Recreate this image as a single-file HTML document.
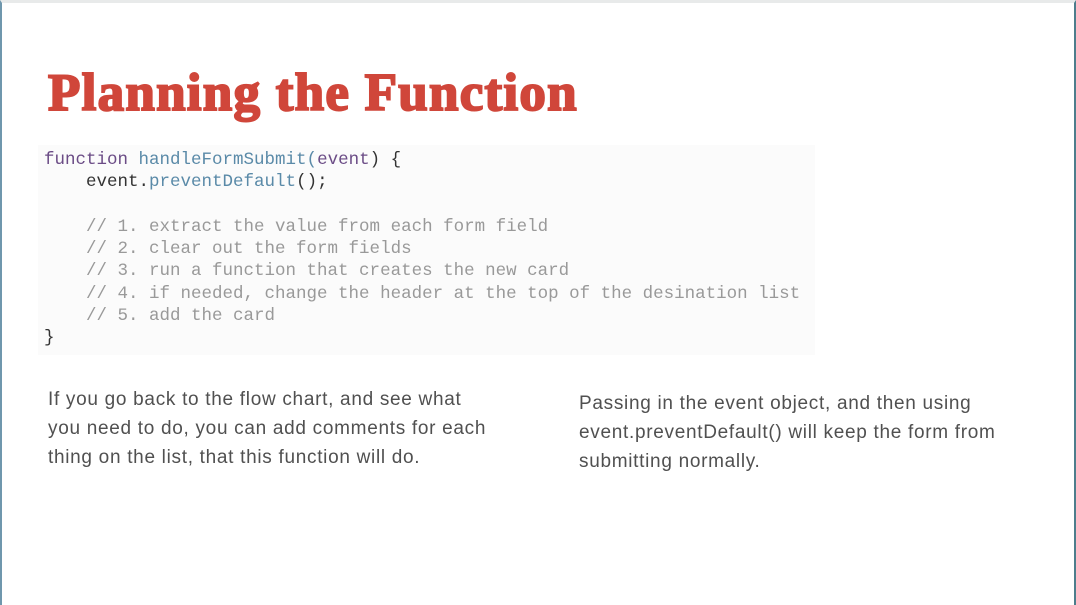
<!DOCTYPE html>
<html><head><meta charset="utf-8"><style>
html,body{margin:0;padding:0;background:#fff;width:1076px;height:605px;overflow:hidden;position:relative}
.frame{position:absolute;left:0;top:0;width:1076px;height:605px;box-sizing:border-box;border-left:2px solid #6f97ad;border-right:2px solid #4d7d8c;border-top:3px solid #e8eaea}
h1{position:absolute;left:48px;top:63px;margin:0;font-family:"Liberation Serif",serif;font-weight:bold;font-size:53px;color:#d0463a;letter-spacing:1.25px;line-height:60px;-webkit-text-stroke:2px #d0463a}
.code{position:absolute;left:38px;top:145px;width:777px;height:210px;background:#fbfbfb}
pre{position:absolute;left:44px;top:149px;margin:0;font-family:"Liberation Mono",monospace;font-size:17.5px;line-height:22.3px;color:#333}
.k{color:#6b4c86}.f{color:#5a8aa8}.c{color:#999}
p{position:absolute;margin:0;font-family:"Liberation Sans",sans-serif;font-size:19px;letter-spacing:0.7px;line-height:29px;color:#505050}
</style></head><body>
<div class="frame"></div>
<h1>Planning the Function</h1>
<div class="code"></div>
<pre><span class="k">function</span> <span class="f">handleFormSubmit(</span><span class="k">event</span>) {
    event.<span class="f">preventDefault</span>();

    <span class="c">// 1. extract the value from each form field</span>
    <span class="c">// 2. clear out the form fields</span>
    <span class="c">// 3. run a function that creates the new card</span>
    <span class="c">// 4. if needed, change the header at the top of the desination list</span>
    <span class="c">// 5. add the card</span>
}</pre>
<p style="left:48px;top:385px;width:480px">If you go back to the flow chart, and see what<br>you need to do, you can add comments for each<br>thing on the list, that this function will do.</p>
<p style="left:579px;top:389px;width:480px">Passing in the event object, and then using<br>event.preventDefault() will keep the form from<br>submitting normally.</p>
</body></html>
